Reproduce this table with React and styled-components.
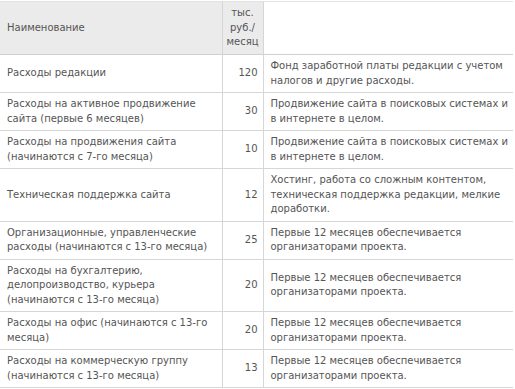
import React from 'react'
import styled, { createGlobalStyle } from 'styled-components';

const rows = [
    { name: ['Расходы редакции'], sum: 120, note: ['Фонд заработной платы редакции с учетом', 'налогов и другие расходы.'] },
    { name: ['Расходы на активное продвижение', 'сайта (первые 6 месяцев)'], sum: 30, note: ['Продвижение сайта в поисковых системах и', 'в интернете в целом.'] },
    { name: ['Расходы на продвижения сайта', '(начинаются с 7-го месяца)'], sum: 10, note: ['Продвижение сайта в поисковых системах и', 'в интернете в целом.'] },
    { name: ['Техническая поддержка сайта'], sum: 12, note: ['Хостинг, работа со сложным контентом,', 'техническая поддержка редакции, мелкие', 'доработки.'] },
    { name: ['Организационные, управленческие', 'расходы (начинаются с 13-го месяца)'], sum: 25, note: ['Первые 12 месяцев обеспечивается', 'организаторами проекта.'] },
    { name: ['Расходы на бухгалтерию,', 'делопроизводство, курьера', '(начинаются с 13-го месяца)'], sum: 20, note: ['Первые 12 месяцев обеспечивается', 'организаторами проекта.'] },
    { name: ['Расходы на офис (начинаются с 13-го', 'месяца)'], sum: 20, note: ['Первые 12 месяцев обеспечивается', 'организаторами проекта.'] },
    { name: ['Расходы на коммерческую группу', '(начинаются с 13-го месяца)'], sum: 13, note: ['Первые 12 месяцев обеспечивается', 'организаторами проекта.'] },
];

// lines are kept as in the source so the wraps match
const Lines = ({ lines }) => lines.map((l, i) => (
    <React.Fragment key={i}>{i > 0 && <br />}{l}</React.Fragment>
));

function App() {
    return (
        <>
            <GlobalStyle />
            <Table>
                <colgroup>
                    <col style={{ width: 222 }} />
                    <col style={{ width: 41 }} />
                    <col />
                </colgroup>
                <thead>
                    <tr>
                        <HeadCell>Наименование</HeadCell>
                        <HeadCell center>тыс.<br />руб./<br />месяц</HeadCell>
                        <HeadCell blank></HeadCell>
                    </tr>
                </thead>
                <tbody>
                    {rows.map((row, index) => (
                        <tr key={index}>
                            <Cell><Lines lines={row.name} /></Cell>
                            <Cell right>{row.sum}</Cell>
                            <Cell><Lines lines={row.note} /></Cell>
                        </tr>
                    ))}
                </tbody>
            </Table>
        </>
    )
}

export default App

const GlobalStyle = createGlobalStyle`
    body {
        margin: 0;
        background: #fff;
    }
`

const Table = styled.table`
    width: 513px;
    margin-top: 1px;
    border-collapse: collapse;
    table-layout: fixed;
    font-family: "DejaVu Sans", Verdana, sans-serif;
    font-size: 10px;
    line-height: 14.5px;
    color: #555;
`

const HeadCell = styled.th`
    height: 52px;
    padding: 0 6px 0 7px;
    font-weight: normal;
    text-align: ${props => props.center ? 'center' : 'left'};
    vertical-align: middle;
    background: ${props => props.blank ? '#fff' : '#ebebeb'};
    border-top: 1px solid #e2e2e2;
    border-bottom: 1px solid #cfcfcf;
    border-left: 1px solid #d6d6d6;
    &:first-child { border-left: none; }
    &:nth-child(2) { padding: 0 2px; }
`

const Cell = styled.td`
    padding: 4px 5px 4px 7px;
    vertical-align: middle;
    text-align: ${props => props.right ? 'right' : 'left'};
    border-bottom: 1px solid #d6d6d6;
    border-left: 1px solid #d6d6d6;
    white-space: nowrap;
    &:first-child { border-left: none; }
`
